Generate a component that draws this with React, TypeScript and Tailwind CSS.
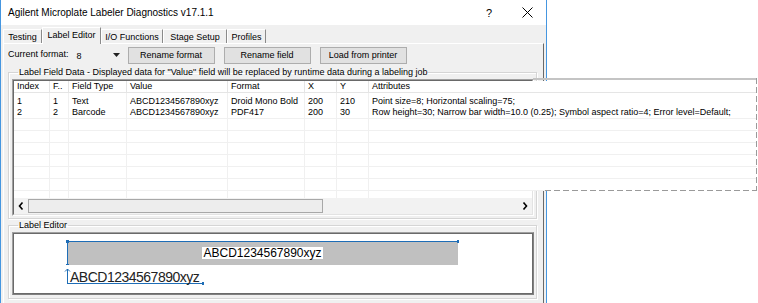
import React from "react";

const colW = ["w-[36px]", "w-[19px]", "w-[58px]", "w-[101px]", "w-[77px]", "w-[32px]", "w-[32px]", "w-[388px]"];
const headers = ["Index", "F..", "Field Type", "Value", "Format", "X", "Y", "Attributes"];
const data = [
  ["1", "1", "Text", "ABCD1234567890xyz", "Droid Mono Bold", "200", "210", "Point size=8; Horizontal scaling=75;"],
  [
    "2",
    "2",
    "Barcode",
    "ABCD1234567890xyz",
    "PDF417",
    "200",
    "30",
    "Row height=30; Narrow bar width=10.0 (0.25); Symbol aspect ratio=4; Error level=Default;",
  ],
];

const tabs = [
  { label: "Testing", w: "w-[39px]", sel: false },
  { label: "Label Editor", w: "w-[59px]", sel: true },
  { label: "I/O Functions", w: "w-[62px]", sel: false },
  { label: "Stage Setup", w: "w-[64px]", sel: false },
  { label: "Profiles", w: "w-[39px]", sel: false },
];

function Row({ cells, h, top }: { cells?: string[]; h: string; top?: boolean }) {
  return (
    <div className={`flex ${h} ${top ? "border-t border-[#f0f0f0]" : ""}`}>
      {colW.map((w, i) => (
        <div
          key={i}
          className={`${w} shrink-0 pl-[3px] whitespace-nowrap overflow-hidden leading-[11px] ${
            i < 7 ? "border-r border-[#f0f0f0]" : ""
          }`}
        >
          {cells ? cells[i] : ""}
        </div>
      ))}
    </div>
  );
}

function Chevron({ dir }: { dir: "l" | "r" }) {
  return (
    <svg width="6" height="8" viewBox="0 0 6 8">
      {dir === "l" ? (
        <polyline points="4.5,0.5 1.5,4 4.5,7.5" fill="none" stroke="#000" strokeWidth="1.6" />
      ) : (
        <polyline points="1.5,0.5 4.5,4 1.5,7.5" fill="none" stroke="#000" strokeWidth="1.6" />
      )}
    </svg>
  );
}

export default function App() {
  return (
    <div className="w-[758px] h-[303px] bg-white overflow-hidden font-['Liberation_Sans',Arial,sans-serif] text-black">
      <div className="w-[547px] h-[303px] border-l border-r border-[#4596e0] bg-[#f0f0f0] flex flex-col">
        {/* Title bar */}
        <div className="h-[25px] bg-white flex items-center pl-[7px] pr-[13px] shrink-0">
          <span className="text-[10px] leading-[12px]">Agilent Microplate Labeler Diagnostics v17.1.1</span>
          <span className="ml-auto text-[11px] leading-[12px] mr-[30px]">?</span>
          <svg width="11" height="11" viewBox="0 0 11 11">
            <line x1="0.5" y1="0.5" x2="10.5" y2="10.5" stroke="#000" strokeWidth="1" />
            <line x1="10.5" y1="0.5" x2="0.5" y2="10.5" stroke="#000" strokeWidth="1" />
          </svg>
        </div>

        {/* Tabs */}
        <div className="h-[18px] flex items-end pl-[2px] shrink-0 text-[9px]">
          {tabs.map((t) => (
            <div
              key={t.label}
              className={`${t.w} shrink-0 flex justify-center border-t border-l border-t-white border-l-white border-r border-r-[#8a8a8a] ${
                t.sel
                  ? "h-[17px] -mb-px relative z-10 bg-[#f0f0f0] items-start pt-[2px] leading-[11px]"
                  : "h-[14px] items-start pt-[2px] leading-[11px]"
              }`}
            >
              {t.label}
            </div>
          ))}
        </div>

        {/* Panel */}
        <div className="flex-1 ml-[2px] mr-[2px] border-t border-l border-white border-r border-r-[#696969] pl-[4px] pr-[6px] pt-[2px] text-[9px]">
          {/* Controls row */}
          <div className="flex items-center h-[18px]">
            <span className="leading-[11px] mt-[-2px]">Current format:</span>
            <div className="w-[51px] ml-[5px] h-[16px] flex items-center pl-[3px] pr-[5px]">
              <span className="leading-[11px] mt-[2px]">8</span>
              <svg className="ml-auto" width="7" height="4" viewBox="0 0 7 4">
                <polygon points="0,0 7,0 3.5,4" fill="#222" />
              </svg>
            </div>
            <button className="ml-[3px] w-[87px] h-[17px] border border-[#adadad] bg-[#e1e1e1] leading-[11px]">
              Rename format
            </button>
            <button className="ml-[9px] w-[87px] h-[17px] border border-[#adadad] bg-[#e1e1e1] leading-[11px]">
              Rename field
            </button>
            <button className="ml-[9px] w-[87px] h-[17px] border border-[#adadad] bg-[#e1e1e1] leading-[11px]">
              Load from printer
            </button>
          </div>

          {/* Group 1 */}
          <fieldset className="mt-[2px] border border-[#d5d5d5] shadow-[inset_1px_1px_0_#fff,1px_1px_0_#fff] pl-[3px] pr-[2px] pb-[2px] min-w-0">
            <legend className="ml-[6px] px-[1px] leading-[12px] whitespace-nowrap">
              Label Field Data - Displayed data for "Value" field will be replaced by runtime data during a labeling job
            </legend>
            <div className="mt-[1px] border border-t-[#a0a0a0] border-l-[#a0a0a0] border-r-white border-b-white">
              <div className="h-[135px] border border-t-[#696969] border-l-[#696969] border-r-[#e3e3e3] border-b-[#e3e3e3] bg-white flex flex-col">
                {/* table (overflows to the right) */}
                <div className="relative z-10 w-[743px] bg-white shrink-0">
                  <div className="absolute -top-[3px] left-[519px] right-0 h-[2px] bg-[#c4c4c4]" />
                  {/* header */}
                  <div className="flex h-[12px] border-b border-[#e5e5e5]">
                    {headers.map((hd, i) => (
                      <div
                        key={hd}
                        className={`${colW[i]} shrink-0 pl-[3px] leading-[11px] whitespace-nowrap overflow-hidden ${
                          i < 7 ? "border-r border-[#e5e5e5]" : ""
                        }`}
                      >
                        {hd}
                      </div>
                    ))}
                  </div>
                  <Row h="h-[3px]" />
                  <Row h="h-[11px]" cells={data[0]} />
                  <Row h="h-[11px]" cells={data[1]} />
                  <Row h="h-[12px]" top />
                  <Row h="h-[12px]" top />
                  <Row h="h-[12px]" top />
                  <Row h="h-[12px]" top />
                  <Row h="h-[12px]" top />
                  <Row h="h-[12px]" top />
                  <div className="h-px bg-[#f0f0f0]" />
                  {/* dashed frame of the overflowing part */}
                  <div className="absolute top-[-3px] bottom-0 right-0 w-px bg-[linear-gradient(to_bottom,#9a9a9a_6px,transparent_6px)] bg-[length:1px_9px]" />
                  <div className="absolute bottom-0 left-[531px] right-0 h-px bg-[linear-gradient(to_right,#9a9a9a_6px,#fff_6px)] bg-[length:9px_1px]" />
                </div>
                {/* filler */}
                <div className="h-[7px] overflow-hidden shrink-0">
                  <div className="w-[743px]">
                    <Row h="h-[7px]" />
                  </div>
                </div>
                {/* horizontal scrollbar */}
                <div className="h-[16px] flex items-stretch bg-[#f2f2f2] shrink-0">
                  <div className="w-[14px] flex items-center justify-center">
                    <Chevron dir="l" />
                  </div>
                  <div className="w-[295px] my-[1px] border border-[#a8a8a8] bg-[#ededed]" />
                  <div className="flex-1" />
                  <div className="w-[15px] flex items-center justify-center">
                    <Chevron dir="r" />
                  </div>
                </div>
              </div>
            </div>
          </fieldset>

          {/* Group 2 */}
          <fieldset className="border border-[#d5d5d5] shadow-[inset_1px_1px_0_#fff,1px_1px_0_#fff] pl-[3px] pr-[2px] pb-[3px] min-w-0">
            <legend className="ml-[6px] px-[1px] leading-[12px]">Label Editor</legend>
            <div className="mt-px border border-t-[#a0a0a0] border-l-[#a0a0a0] border-r-[#808080] border-b-[#808080]">
              <div className="h-[61px] border border-[#6a6a6a] bg-white flex flex-col pl-[53px] pt-[7px]">
                {/* barcode element */}
                <div className="relative w-[391px] flex flex-col">
                  <div className="h-px bg-[#1e6db6]" />
                  <div className="h-[23px] bg-[#c0c0c0] flex items-center justify-center">
                    <span className="bg-white px-[1px] text-[12px] leading-[12px] mt-[-2px]">ABCD1234567890xyz</span>
                  </div>
                  <div className="absolute left-0 top-0 w-px h-[24px] bg-[#1e6db6]" />
                  <div className="absolute -left-[1px] -top-[1px] w-[3px] h-[3px] bg-[#1e6db6]" />
                  <div className="absolute -left-[1px] top-[23px] w-[3px] h-px bg-[#1e6db6]" />
                  <div className="absolute -right-[1px] -top-[1px] w-[2px] h-[3px] bg-[#1e6db6]" />
                </div>
                {/* text element */}
                <div className="relative mt-[4px] w-[136px] h-[15px] border-b border-[#1e6db6] pl-[3px]">
                  <span className="text-[14px] leading-[16px] tracking-[-0.5px] text-[#222] whitespace-nowrap">
                    ABCD1234567890xyz
                  </span>
                  <svg className="absolute -left-[3px] -top-[1px]" width="7" height="16" viewBox="0 0 7 16">
                    <line x1="3.5" y1="1" x2="3.5" y2="16" stroke="#1e6db6" strokeWidth="1" />
                    <polyline points="1,3.5 3.5,1 6,3.5" fill="none" stroke="#1e6db6" strokeWidth="1" />
                  </svg>
                  <div className="absolute -right-[1px] bottom-[-2px] w-[2px] h-[3px] bg-[#1e6db6]" />
                </div>
              </div>
            </div>
          </fieldset>
        </div>
      </div>
    </div>
  );
}
